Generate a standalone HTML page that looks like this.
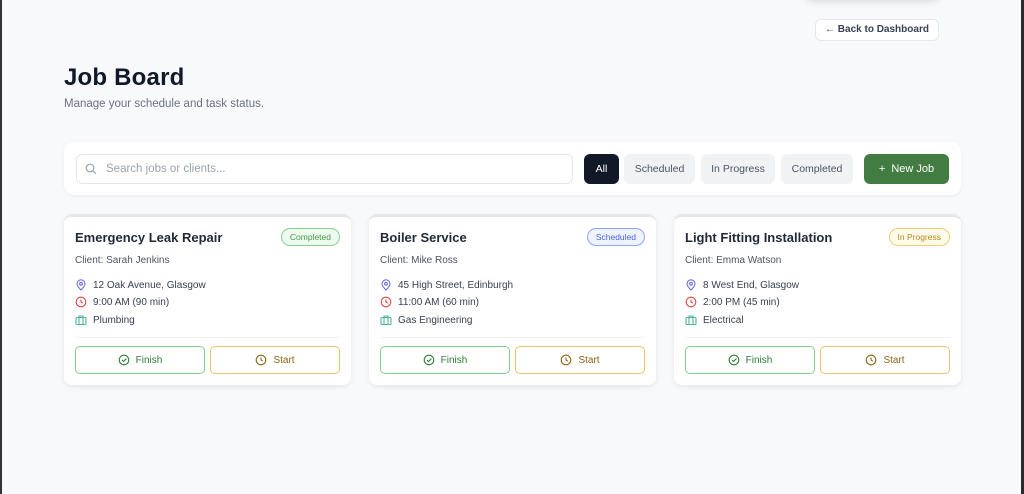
<!DOCTYPE html>
<html><head><meta charset="utf-8"><style>
*{box-sizing:border-box;margin:0;padding:0}
body{width:1024px;height:494px;background:#f8f9fb;font-family:"Liberation Sans",Arial,sans-serif;position:relative;overflow:hidden;color:#1f2937}
.a{position:absolute}
.lb{left:0;top:0;width:2px;height:494px;background:#333}
.rb{left:1021px;top:0;width:3px;height:494px;background:#2a2a2a}
.topsh{left:805px;top:-20px;width:135px;height:20px;box-shadow:0 2px 8px rgba(0,0,0,.12);border-radius:8px;background:#f8f9fb}
.back{left:815px;top:19px;width:124px;height:22px;background:#fff;border:1px solid #e5e7eb;border-radius:6px;font-size:10px;font-weight:bold;color:#374151;line-height:20px;text-align:center}
h1{position:absolute;left:64px;top:64px;font-size:24px;font-weight:900;color:#111827;letter-spacing:.2px}
.sub{left:64px;top:98px;font-size:11.5px;color:#6b7280}
.bar{left:64px;top:142px;width:897px;height:53px;background:#fff;border-radius:10px;box-shadow:0 1px 3px rgba(0,0,0,.06)}
.search{left:76px;top:154px;width:497px;height:30px;border:1px solid #e5e7eb;border-radius:6px;background:#fff;font-size:11.5px;color:#9ca3af;line-height:28px;padding-left:29px}
.f{top:154px;height:30px;border-radius:6px;background:#f1f2f4;font-size:10.5px;color:#4b5563;line-height:30px;text-align:center}
.card{width:287px;height:171px;background:#fff;border-radius:8px;border-top:3px solid #e5e7eb;box-shadow:0 2px 6px rgba(0,0,0,.08);top:214px}
.card .t{position:absolute;left:11px;top:13px;font-size:13px;font-weight:bold;color:#1f2937}
.badge{position:absolute;right:11px;top:11px;height:18px;border-radius:9px;font-size:8.5px;line-height:16px;padding:0 8px;border:1px solid}
.card .c{position:absolute;left:11px;top:38px;font-size:10px;color:#4b5563}
.row{position:absolute;left:11px;font-size:10px;color:#374151;display:flex;align-items:center}
.row svg{margin-right:6px}
.hr{position:absolute;left:11px;right:11px;top:120px;height:1px;background:#eef0f2}
.btn{position:absolute;top:129px;width:130px;height:28px;border-radius:5px;font-size:10px;display:flex;align-items:center;justify-content:center;gap:6px}
.fin{left:11px;border:1px solid #86d08f;color:#2f7d3a}
.st{left:146px;border:1px solid #e8c760;color:#8a6416}
</style></head><body>
<div class="a lb"></div><div class="a rb"></div><div class="a topsh"></div>
<div class="a back">&larr; Back to Dashboard</div>
<h1>Job Board</h1>
<div class="a sub">Manage your schedule and task status.</div>
<div class="a bar"></div>
<div class="a search">Search jobs or clients...</div>
<svg class="a" style="left:85px;top:163px" width="12" height="12" viewBox="0 0 12 12" fill="none" stroke="#9ca3af" stroke-width="1.2"><circle cx="5" cy="5" r="3.8"/><path d="M8 8l3 3"/></svg>
<div class="a f" style="left:584px;width:35px;background:#111827;color:#fff">All</div>
<div class="a f" style="left:624px;width:71px">Scheduled</div>
<div class="a f" style="left:701px;width:74px">In Progress</div>
<div class="a f" style="left:781px;width:72px">Completed</div>
<div class="a f" style="left:864px;width:85px;background:#437c43;color:#fff;font-size:11px">+&nbsp;&nbsp;New Job</div>

<div class="a card" style="left:64px">
<div class="t">Emergency Leak Repair</div>
<div class="badge" style="color:#3f9a4b;border-color:#86d08f;background:#eefaef">Completed</div>
<div class="c">Client: Sarah Jenkins</div>
<div class="row" style="top:62px"><svg width="12" height="12" viewBox="0 0 12 12" fill="none" stroke="#6d6de0" stroke-width="1.1"><path d="M6 11S2 7.2 2 4.8a4 4 0 018 0C10 7.2 6 11 6 11z"/><circle cx="6" cy="4.8" r="1.4"/></svg>12 Oak Avenue, Glasgow</div>
<div class="row" style="top:79px"><svg width="12" height="12" viewBox="0 0 12 12" fill="none" stroke="#e04848" stroke-width="1.1"><circle cx="6" cy="6" r="4.8"/><path d="M6 3.5V6l1.8 1.2"/></svg>9:00 AM (90 min)</div>
<div class="row" style="top:97px"><svg width="12" height="12" viewBox="0 0 12 12" fill="none" stroke="#4fb39a" stroke-width="1.1"><rect x="1" y="3.5" width="10" height="7" rx="1"/><path d="M4 3.5V2h4v1.5M4 3.5v7M8 3.5v7"/></svg>Plumbing</div>
<div class="hr"></div>
<div class="btn fin"><svg width="12" height="12" viewBox="0 0 12 12" fill="none" stroke="#2f7d3a" stroke-width="1.1"><circle cx="6" cy="6" r="4.8"/><path d="M4 6l1.5 1.5L8.5 4.5"/></svg>Finish</div>
<div class="btn st"><svg width="12" height="12" viewBox="0 0 12 12" fill="none" stroke="#8a6416" stroke-width="1.1"><circle cx="6" cy="6" r="4.8"/><path d="M6 3.5V6l1.8 1.2"/></svg>Start</div>
</div>

<div class="a card" style="left:369px">
<div class="t">Boiler Service</div>
<div class="badge" style="color:#4d63d8;border-color:#8fa6f0;background:#eef2ff">Scheduled</div>
<div class="c">Client: Mike Ross</div>
<div class="row" style="top:62px"><svg width="12" height="12" viewBox="0 0 12 12" fill="none" stroke="#6d6de0" stroke-width="1.1"><path d="M6 11S2 7.2 2 4.8a4 4 0 018 0C10 7.2 6 11 6 11z"/><circle cx="6" cy="4.8" r="1.4"/></svg>45 High Street, Edinburgh</div>
<div class="row" style="top:79px"><svg width="12" height="12" viewBox="0 0 12 12" fill="none" stroke="#e04848" stroke-width="1.1"><circle cx="6" cy="6" r="4.8"/><path d="M6 3.5V6l1.8 1.2"/></svg>11:00 AM (60 min)</div>
<div class="row" style="top:97px"><svg width="12" height="12" viewBox="0 0 12 12" fill="none" stroke="#4fb39a" stroke-width="1.1"><rect x="1" y="3.5" width="10" height="7" rx="1"/><path d="M4 3.5V2h4v1.5M4 3.5v7M8 3.5v7"/></svg>Gas Engineering</div>
<div class="hr"></div>
<div class="btn fin"><svg width="12" height="12" viewBox="0 0 12 12" fill="none" stroke="#2f7d3a" stroke-width="1.1"><circle cx="6" cy="6" r="4.8"/><path d="M4 6l1.5 1.5L8.5 4.5"/></svg>Finish</div>
<div class="btn st"><svg width="12" height="12" viewBox="0 0 12 12" fill="none" stroke="#8a6416" stroke-width="1.1"><circle cx="6" cy="6" r="4.8"/><path d="M6 3.5V6l1.8 1.2"/></svg>Start</div>
</div>

<div class="a card" style="left:674px">
<div class="t">Light Fitting Installation</div>
<div class="badge" style="color:#b9861b;border-color:#efcf6e;background:#fffbea">In Progress</div>
<div class="c">Client: Emma Watson</div>
<div class="row" style="top:62px"><svg width="12" height="12" viewBox="0 0 12 12" fill="none" stroke="#6d6de0" stroke-width="1.1"><path d="M6 11S2 7.2 2 4.8a4 4 0 018 0C10 7.2 6 11 6 11z"/><circle cx="6" cy="4.8" r="1.4"/></svg>8 West End, Glasgow</div>
<div class="row" style="top:79px"><svg width="12" height="12" viewBox="0 0 12 12" fill="none" stroke="#e04848" stroke-width="1.1"><circle cx="6" cy="6" r="4.8"/><path d="M6 3.5V6l1.8 1.2"/></svg>2:00 PM (45 min)</div>
<div class="row" style="top:97px"><svg width="12" height="12" viewBox="0 0 12 12" fill="none" stroke="#4fb39a" stroke-width="1.1"><rect x="1" y="3.5" width="10" height="7" rx="1"/><path d="M4 3.5V2h4v1.5M4 3.5v7M8 3.5v7"/></svg>Electrical</div>
<div class="hr"></div>
<div class="btn fin"><svg width="12" height="12" viewBox="0 0 12 12" fill="none" stroke="#2f7d3a" stroke-width="1.1"><circle cx="6" cy="6" r="4.8"/><path d="M4 6l1.5 1.5L8.5 4.5"/></svg>Finish</div>
<div class="btn st"><svg width="12" height="12" viewBox="0 0 12 12" fill="none" stroke="#8a6416" stroke-width="1.1"><circle cx="6" cy="6" r="4.8"/><path d="M6 3.5V6l1.8 1.2"/></svg>Start</div>
</div>
</body></html>
